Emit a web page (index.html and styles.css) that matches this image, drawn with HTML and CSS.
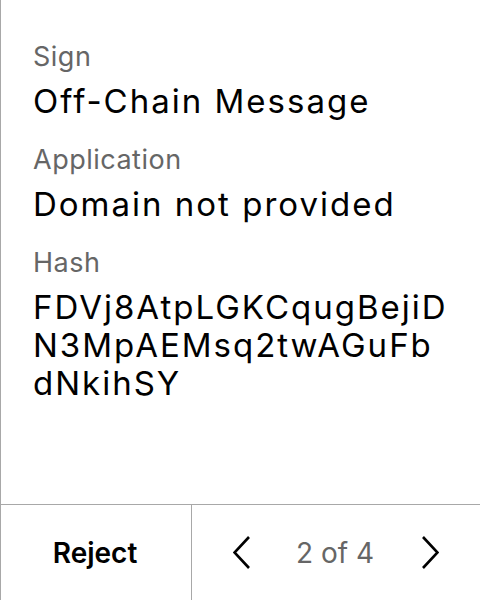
FILE: index.html
```html
<!DOCTYPE html>
<html>
<head>
<meta charset="utf-8">
<link rel="stylesheet" href="styles.css">
</head>
<body>
<div class="screen">
  <div class="content">
    <div class="field">
      <div class="label">Sign</div>
      <div class="value">Off-Chain Message</div>
    </div>
    <div class="field">
      <div class="label">Application</div>
      <div class="value">Domain not provided</div>
    </div>
    <div class="field">
      <div class="label">Hash</div>
      <div class="value hash">FDVj8AtpLGKCqugBejiD<br>N3MpAEMsq2twAGuFb<br>dNkihSY</div>
    </div>
  </div>
  <div class="footer">
    <div class="reject">Reject</div>
    <div class="pager">
      <svg class="chev prev" width="17" height="34" viewBox="0 0 17 34"><path d="M16 1 L1.5 16.5 L16 32" fill="none" stroke="#000" stroke-width="2.6"/></svg>
      <span class="count">2 of 4</span>
      <svg class="chev next" width="17" height="34" viewBox="0 0 17 34"><path d="M1 1 L15.5 16.5 L1 32" fill="none" stroke="#000" stroke-width="2.6"/></svg>
    </div>
  </div>
</div>
</body>
</html>
```
FILE: styles.css
```css
html, body {
  margin: 0;
  padding: 0;
  background: #fff;
}
.screen {
  width: 480px;
  height: 600px;
  box-sizing: border-box;
  border-left: 1px solid #a8a8a8;
  display: flex;
  flex-direction: column;
  font-family: Inter, "Noto Sans", sans-serif;
  color: #000;
}
.content {
  flex: 1;
  padding: 41px 0 0 32px;
  display: flex;
  flex-direction: column;
  gap: 24px;
}
.label {
  font-size: 27px;
  line-height: 32px;
  letter-spacing: 0.5px;
  color: #666;
  margin-bottom: 9px;
}
.value {
  font-size: 33px;
  line-height: 38px;
  letter-spacing: 2px;
}
.footer {
  height: 95px;
  border-top: 1px solid #a8a8a8;
  display: flex;
}
.reject {
  width: 191px;
  border-right: 1px solid #a8a8a8;
  display: flex;
  align-items: center;
  justify-content: center;
  padding-right: 2px;
  box-sizing: border-box;
  font-size: 28px;
  font-weight: 600;
}
.pager {
  flex: 1;
  display: flex;
  align-items: center;
  justify-content: center;
}
.count {
  font-size: 28px;
  color: #666;
  margin: 0 48px 0 46px;
}
```
